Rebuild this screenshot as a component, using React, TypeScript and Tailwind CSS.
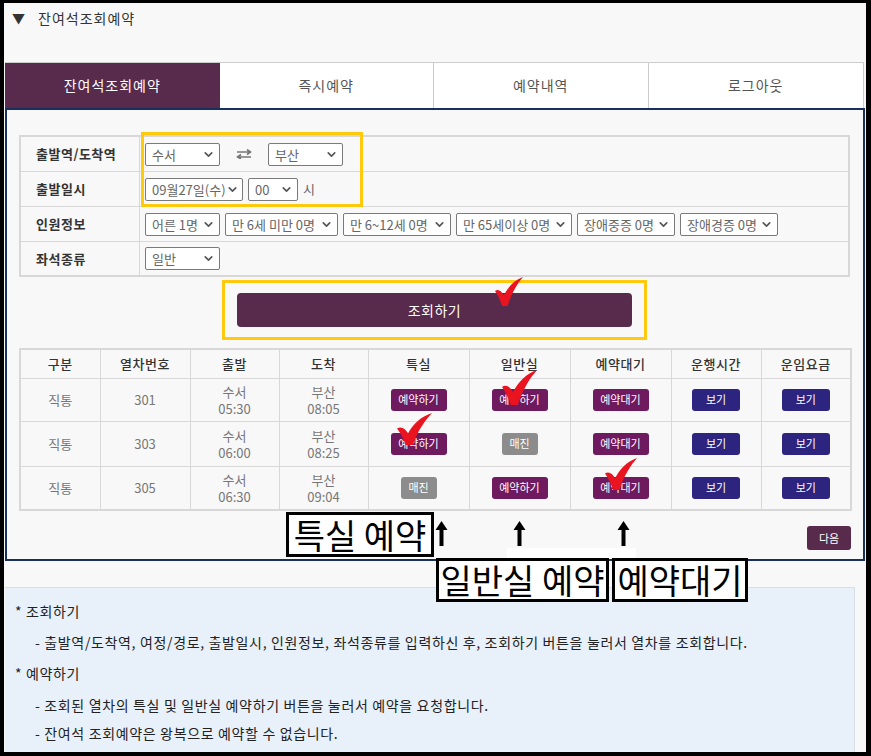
import { ChevronDown } from "lucide-react";

const font = "font-['Noto_Sans_CJK_KR','Noto_Sans',sans-serif]";

function Select({ label, w }: { label: string; w: string }) {
  return (
    <div
      className={`${w} h-[23px] shrink-0 bg-white border border-[#7a7a7a] rounded-[2px] flex items-center justify-between pl-[6px] pr-[4px] text-[13px] text-[#666]`}
    >
      <span className="whitespace-nowrap leading-none">{label}</span>
      <ChevronDown size={13} strokeWidth={3} className="text-[#555] shrink-0" />
    </div>
  );
}

function Check({ x, y, w, h }: { x: number; y: number; w: number; h: number }) {
  // red brush checkmark drawn over the screenshot
  return (
    <svg
      className="absolute pointer-events-none"
      style={{ left: x, top: y, width: w, height: h }}
      viewBox="0 0 30 30"
      preserveAspectRatio="none"
    >
      <path
        d="M0 14.5 C3.5 12 7 14.5 9.5 19 C14 10 21 3 30 0 C24 7 18 16 13.5 30 L7.5 30 C5.5 23.5 3 18.5 0 14.5 Z"
        fill="#ea1320"
      />
    </svg>
  );
}

function UpArrow({ x }: { x: number }) {
  return (
    <svg className="absolute" style={{ left: x, top: 521, width: 13, height: 25 }} viewBox="0 0 13 25">
      <path d="M6.5 0 L12.5 9 L8.5 9 L8.5 25 L4.5 25 L4.5 9 L0.5 9 Z" fill="#000" />
    </svg>
  );
}

function Btn({ label, color, w }: { label: string; color: string; w: string }) {
  return (
    <span
      className={`inline-flex items-center justify-center ${w} h-[22px] rounded-[3px] ${color} text-white text-[11px] leading-none`}
    >
      {label}
    </span>
  );
}

const reserve = <Btn label="예약하기" color="bg-[#6f1a5f]" w="w-[56px]" />;
const wait = <Btn label="예약대기" color="bg-[#6f1a5f]" w="w-[56px]" />;
const soldOut = <Btn label="매진" color="bg-[#8c8c8c]" w="w-[36px]" />;
const view = <Btn label="보기" color="bg-[#2d2480]" w="w-[48px]" />;

const trains = [
  { no: "301", dep: "05:30", arr: "08:05", special: reserve, normal: reserve, h: "h-[43px]" },
  { no: "303", dep: "06:00", arr: "08:25", special: reserve, normal: soldOut, h: "h-[45px]" },
  { no: "305", dep: "06:30", arr: "09:04", special: soldOut, normal: reserve, h: "h-[44px]" },
];

const formRows = [
  {
    label: "출발역/도착역",
    h: "h-[35px]",
    body: (
      <>
        <Select label="수서" w="w-[75px]" />
        <svg width="16" height="10" viewBox="0 0 16 10" className="mx-[16px]">
          <path d="M1 3 H14 M11 0.5 L14.5 3 L11 5.5" stroke="#777" strokeWidth="1.6" fill="none" />
          <path d="M15 8 H2 M5 5.5 L1.5 8 L5 10" stroke="#777" strokeWidth="1.6" fill="none" />
        </svg>
        <Select label="부산" w="w-[75px]" />
      </>
    ),
  },
  {
    label: "출발일시",
    h: "h-[35px]",
    body: (
      <>
        <Select label="09월27일(수)" w="w-[98px]" />
        <div className="w-[5px]" />
        <Select label="00" w="w-[50px]" />
        <span className="ml-[5px] text-[13px] text-[#666]">시</span>
      </>
    ),
  },
  {
    label: "인원정보",
    h: "h-[35px]",
    body: (
      <div className="flex gap-[5px]">
        <Select label="어른 1명" w="w-[75px]" />
        <Select label="만 6세 미만 0명" w="w-[113px]" />
        <Select label="만 6~12세 0명" w="w-[108px]" />
        <Select label="만 65세이상 0명" w="w-[116px]" />
        <Select label="장애중증 0명" w="w-[98px]" />
        <Select label="장애경증 0명" w="w-[98px]" />
      </div>
    ),
  },
  { label: "좌석종류", h: "h-[33px]", body: <Select label="일반" w="w-[75px]" /> },
];

export default function App() {
  return (
    <div className={`relative w-[871px] h-[756px] bg-black pl-[4px] pt-[3px] pr-[5px] pb-[4px] ${font}`}>
      <div className="h-full bg-[#f8f8f8] overflow-hidden">
        {/* header */}
        <div className="h-[59px] flex items-start pt-[6px] pl-[8px] text-[14px] text-[#333]">
          <span className="text-[13px] w-[26px] leading-[18px]">▼</span>
          <span className="leading-[18px] tracking-[1px]">잔여석조회예약</span>
        </div>

        {/* tabs */}
        <div className="ml-[1px] w-[859px] h-[46px] grid grid-cols-4 border-t border-r border-[#cccccc] text-[14px] tracking-[1px]">
          <div className="bg-[#582a4c] text-white flex items-center justify-center">잔여석조회예약</div>
          <div className="bg-white text-[#555] flex items-center justify-center border-r border-[#cccccc]">즉시예약</div>
          <div className="bg-white text-[#555] flex items-center justify-center border-r border-[#cccccc]">예약내역</div>
          <div className="bg-white text-[#555] flex items-center justify-center">로그아웃</div>
        </div>

        {/* search panel */}
        <div className="ml-[1px] w-[860px] border-2 border-[#17305c] pt-[25px] pl-[12px] pr-[13px] pb-[9px]">
          <div className="w-[831px] border-2 border-[#d8d8d8] text-[13px]">
            {formRows.map((row, i) => (
              <div key={i} className={`flex ${row.h} ${i < 3 ? "border-b border-[#d8d8d8]" : ""}`}>
                <div className="w-[119px] border-r border-[#d8d8d8] flex items-center pl-[15px] font-bold text-[13px] text-[#333] tracking-[0.5px]">
                  {row.label}
                </div>
                <div className="flex-1 flex items-center pl-[5px]">{row.body}</div>
              </div>
            ))}
          </div>

          {/* search button */}
          <div className="mt-[3px] mx-auto w-[425px] h-[60px] border-[3px] border-[#ffc90e] flex items-center justify-center">
            <button className="w-[395px] h-[34px] rounded-[4px] bg-[#582a4c] text-white text-[14px] tracking-[0.5px]">조회하기</button>
          </div>

          {/* results */}
          <table className="mt-[8px] w-[831px] border-collapse border-2 border-[#d8d8d8] text-[13px] table-fixed">
            <colgroup>
              <col className="w-[80px]" />
              <col className="w-[90px]" />
              <col className="w-[89px]" />
              <col className="w-[89px]" />
              <col className="w-[101px]" />
              <col className="w-[101px]" />
              <col className="w-[101px]" />
              <col className="w-[90px]" />
              <col className="w-[90px]" />
            </colgroup>
            <thead>
              <tr className="h-[29px] text-[#333]">
                {["구분", "열차번호", "출발", "도착", "특실", "일반실", "예약대기", "운행시간", "운임요금"].map((h) => (
                  <th key={h} className="border border-[#d8d8d8] font-medium text-center p-0 tracking-[0.5px]">
                    {h}
                  </th>
                ))}
              </tr>
            </thead>
            <tbody className="text-[#777]">
              {trains.map((t) => (
                <tr key={t.no} className={t.h}>
                  <td className="border border-[#d8d8d8] text-center p-0">직통</td>
                  <td className="border border-[#d8d8d8] text-center p-0">{t.no}</td>
                  <td className="border border-[#d8d8d8] text-center p-0">
                    <div className="flex flex-col items-center">
                      <span className="h-[17px] leading-[17px]">수서</span>
                      <span className="h-[17px] leading-[17px]">{t.dep}</span>
                    </div>
                  </td>
                  <td className="border border-[#d8d8d8] text-center p-0">
                    <div className="flex flex-col items-center">
                      <span className="h-[17px] leading-[17px]">부산</span>
                      <span className="h-[17px] leading-[17px]">{t.arr}</span>
                    </div>
                  </td>
                  <td className="border border-[#d8d8d8] text-center p-0">{t.special}</td>
                  <td className="border border-[#d8d8d8] text-center p-0">{t.normal}</td>
                  <td className="border border-[#d8d8d8] text-center p-0">{wait}</td>
                  <td className="border border-[#d8d8d8] text-center p-0">{view}</td>
                  <td className="border border-[#d8d8d8] text-center p-0">{view}</td>
                </tr>
              ))}
            </tbody>
          </table>

          <div className="mt-[15px] flex justify-end">
            <button className="w-[44px] h-[24px] rounded-[3px] bg-[#582a4c] text-white text-[11px] -mr-[1px]">다음</button>
          </div>
        </div>

        {/* notice */}
        <div className="mt-[26px] ml-[1px] w-[850px] h-[170px] bg-[#e8f0f9] border-t border-r border-[#d6dee8] pl-[10px] pt-[13px] text-[14px] text-[#222] tracking-[0.65px]">
          <p className="leading-[20px]">* 조회하기</p>
          <p className="leading-[20px] mt-[11px] ml-[20px]">
            - 출발역/도착역, 여정/경로, 출발일시, 인원정보, 좌석종류를 입력하신 후, 조회하기 버튼을 눌러서 열차를 조회합니다.
          </p>
          <p className="leading-[20px] mt-[11px]">* 예약하기</p>
          <p className="leading-[20px] mt-[12px] ml-[20px]">- 조회된 열차의 특실 및 일반실 예약하기 버튼을 눌러서 예약을 요청합니다.</p>
          <p className="leading-[20px] mt-[8px] ml-[20px]">- 잔여석 조회예약은 왕복으로 예약할 수 없습니다.</p>
        </div>
      </div>

      {/* highlight around station / date fields */}
      <div className="absolute left-[141px] top-[132px] w-[222px] h-[75px] border-[3px] border-[#ffc90e] pointer-events-none" />

      {/* annotations */}
      <div className="absolute left-[507px] top-[548px] w-[129px] h-[10px] bg-white" />
      <div className="absolute left-[286px] top-[512px] w-[148px] h-[45px] border-[3px] border-black bg-white flex items-center justify-center text-[34px] leading-none text-black">
        특실 예약
      </div>
      <div className="absolute left-[436px] top-[558px] w-[173px] h-[44px] border-[3px] border-black bg-white flex items-center justify-center text-[34px] leading-none text-black">
        일반실 예약
      </div>
      <div className="absolute left-[612px] top-[558px] w-[136px] h-[44px] border-[3px] border-black bg-white flex items-center justify-center text-[34px] leading-none text-black">
        예약대기
      </div>
      <UpArrow x={435} />
      <UpArrow x={513} />
      <UpArrow x={617} />

      <Check x={495} y={277} w={28} h={29} />
      <Check x={502} y={370} w={35} h={35} />
      <Check x={397} y={413} w={35} h={32} />
      <Check x={605} y={458} w={32} h={32} />
    </div>
  );
}
